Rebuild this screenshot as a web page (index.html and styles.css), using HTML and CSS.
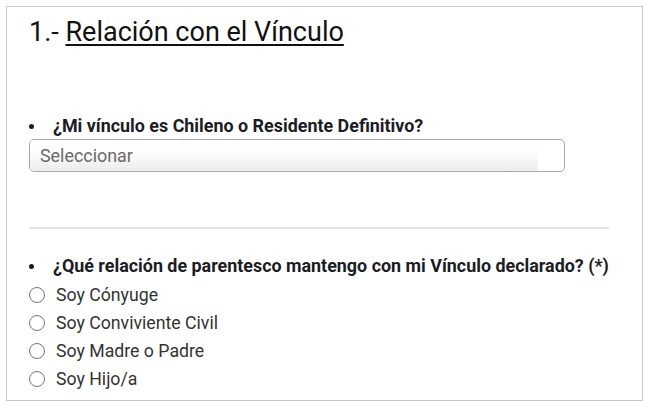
FILE: index.html
```html
<!DOCTYPE html>
<html lang="es">
<head>
<meta charset="utf-8">
<link rel="stylesheet" href="styles.css">
</head>
<body>
<div class="card">
  <h1 class="title">1.- <u>Relación con el Vínculo</u></h1>

  <ul class="q q1">
    <li>¿Mi vínculo es Chileno o Residente Definitivo?</li>
  </ul>
  <div class="select"><span class="placeholder">Seleccionar</span></div>

  <hr class="sep">

  <ul class="q q2">
    <li>¿Qué relación de parentesco mantengo con mi Vínculo declarado? (*)</li>
  </ul>
  <div class="options">
    <label class="opt"><span class="radio"></span>Soy Cónyuge</label>
    <label class="opt"><span class="radio"></span>Soy Conviviente Civil</label>
    <label class="opt"><span class="radio"></span>Soy Madre o Padre</label>
    <label class="opt"><span class="radio"></span>Soy Hijo/a</label>
  </div>
</div>
</body>
</html>
```
FILE: styles.css
```css
html, body {
  margin: 0;
  padding: 0;
  background: #fff;
}
body {
  padding: 6px 0 0 6px;
  font-family: Roboto, "Liberation Sans", sans-serif;
  color: #222;
}
.card {
  box-sizing: border-box;
  width: 637px;
  height: 395px;
  border: 1px solid #c6c6c6;
  padding: 9px 0 0 22px;
  overflow: hidden;
}
.title {
  margin: 0;
  font-size: 27px;
  font-weight: 400;
  line-height: 32px;
  color: #111;
}
.title u {
  text-decoration-thickness: 2px;
  text-underline-offset: 3px;
}
.q {
  margin: 0;
  padding: 0;
  list-style: none;
  font-size: 17.9px;
  font-weight: 700;
  line-height: 22px;
  color: #1c1c24;
}
.q li {
  display: flex;
  align-items: center;
}
.q li::before {
  content: "";
  width: 5px;
  height: 5px;
  border-radius: 50%;
  background: #1c1c24;
  margin: 0 19px 0 0;
}
.q1 {
  margin-top: 67px;
}
.select {
  box-sizing: border-box;
  width: 536px;
  height: 33px;
  margin-top: 2px;
  border: 1px solid #a9a9a9;
  border-radius: 5px;
  padding: 0 26px 0 0;
  display: flex;
}
.placeholder {
  flex: 1;
  display: flex;
  align-items: center;
  padding-left: 10px;
  font-size: 17.9px;
  color: #6a6a6a;
  background: linear-gradient(#fff 0%, #fdfdfd 40%, #ececec 100%);
  border-radius: 4px 0 0 4px;
}
.sep {
  width: 580px;
  margin: 55px 0 0 0;
  border: 0;
  border-top: 2px solid #e6e6e6;
}
.q2 {
  margin-top: 26px;
}
.options {
  display: flex;
  flex-direction: column;
  margin-top: 4px;
}
.opt {
  display: flex;
  align-items: center;
  height: 28px;
  font-size: 17.7px;
  color: #333;
}
.radio {
  box-sizing: border-box;
  width: 16px;
  height: 16px;
  border: 1px solid #777;
  border-radius: 50%;
  margin: 0 11px 0 0;
}
```
